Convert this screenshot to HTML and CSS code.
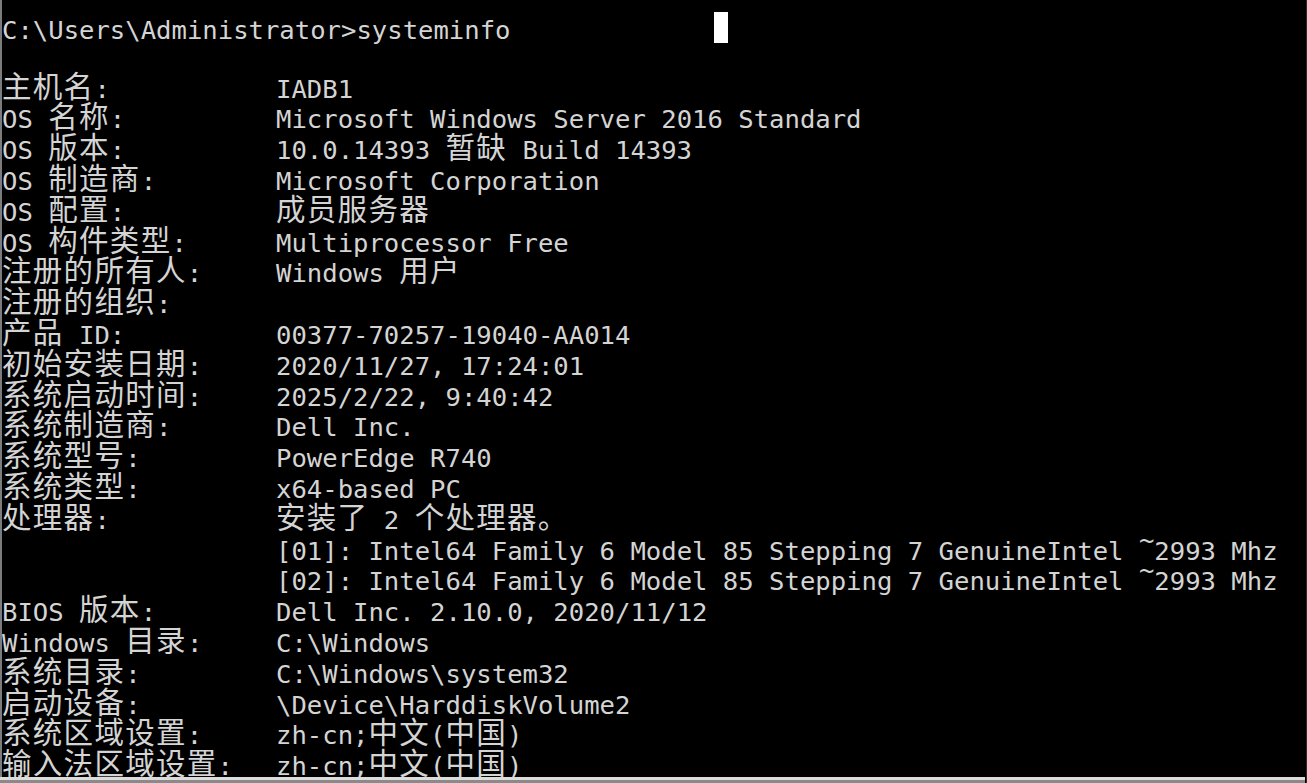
FILE: index.html
```html
<!DOCTYPE html>
<html lang="zh-CN">
<head>
    <meta charset="UTF-8">
    <meta name="viewport" content="width=device-width, initial-scale=1.0">
    <title>systeminfo</title>
    <link rel="stylesheet" href="styles.css">
</head>
<body>
    <div class="console">
        <div class="line">C:\Users\Administrator&gt;systeminfo<span class="cursor"></span></div>
        <div class="line"></div>

        <div class="row"><span class="key"><span class="zh">主机名</span>:</span><span class="val">IADB1</span></div>
        <div class="row"><span class="key">OS <span class="zh">名称</span>:</span><span class="val">Microsoft Windows Server 2016 Standard</span></div>
        <div class="row"><span class="key">OS <span class="zh">版本</span>:</span><span class="val">10.0.14393 <span class="zh">暂缺</span> Build 14393</span></div>
        <div class="row"><span class="key">OS <span class="zh">制造商</span>:</span><span class="val">Microsoft Corporation</span></div>
        <div class="row"><span class="key">OS <span class="zh">配置</span>:</span><span class="val"><span class="zh">成员服务器</span></span></div>
        <div class="row"><span class="key">OS <span class="zh">构件类型</span>:</span><span class="val">Multiprocessor Free</span></div>
        <div class="row"><span class="key"><span class="zh">注册的所有人</span>:</span><span class="val">Windows <span class="zh">用户</span></span></div>
        <div class="row"><span class="key"><span class="zh">注册的组织</span>:</span><span class="val"></span></div>
        <div class="row"><span class="key"><span class="zh">产品</span> ID:</span><span class="val">00377-70257-19040-AA014</span></div>
        <div class="row"><span class="key"><span class="zh">初始安装日期</span>:</span><span class="val">2020/11/27, 17:24:01</span></div>
        <div class="row"><span class="key"><span class="zh">系统启动时间</span>:</span><span class="val">2025/2/22, 9:40:42</span></div>
        <div class="row"><span class="key"><span class="zh">系统制造商</span>:</span><span class="val">Dell Inc.</span></div>
        <div class="row"><span class="key"><span class="zh">系统型号</span>:</span><span class="val">PowerEdge R740</span></div>
        <div class="row"><span class="key"><span class="zh">系统类型</span>:</span><span class="val">x64-based PC</span></div>
        <div class="row"><span class="key"><span class="zh">处理器</span>:</span><span class="val"><span class="zh">安装了</span> 2 <span class="zh">个处理器。</span></span></div>
        <div class="row"><span class="key"></span><span class="val">[01]: Intel64 Family 6 Model 85 Stepping 7 GenuineIntel <span class="tilde">~</span>2993 Mhz</span></div>
        <div class="row"><span class="key"></span><span class="val">[02]: Intel64 Family 6 Model 85 Stepping 7 GenuineIntel <span class="tilde">~</span>2993 Mhz</span></div>
        <div class="row"><span class="key">BIOS <span class="zh">版本</span>:</span><span class="val">Dell Inc. 2.10.0, 2020/11/12</span></div>
        <div class="row"><span class="key">Windows <span class="zh">目录</span>:</span><span class="val">C:\Windows</span></div>
        <div class="row"><span class="key"><span class="zh">系统目录</span>:</span><span class="val">C:\Windows\system32</span></div>
        <div class="row"><span class="key"><span class="zh">启动设备</span>:</span><span class="val">\Device\HarddiskVolume2</span></div>
        <div class="row"><span class="key"><span class="zh">系统区域设置</span>:</span><span class="val">zh-cn;<span class="zh">中文</span>(<span class="zh">中国</span>)</span></div>
        <div class="row"><span class="key"><span class="zh">输入法区域设置</span>:</span><span class="val">zh-cn;<span class="zh">中文</span>(<span class="zh">中国</span>)</span></div>
    </div>

    <div class="frame-bottom"></div>
</body>
</html>
```

FILE: styles.css
```css
html, body{
    margin: 0;
    height: 783px;
    overflow: hidden;
    background-color: #000;
}

.console{
    height: 100%;
    box-sizing: border-box;
    padding-top: 12px;
    border-left: 2px solid #7c7c7c;
    border-right: 1px solid #2a2a2a;
    color: #d4d4d4;
    font-family: "DejaVu Sans Mono", "Liberation Mono", monospace;
    font-size: 25.6px;
}

.line,
.row{
    height: 30.8px;
    line-height: 30.8px;
}

.line,
.key,
.val{
    white-space: pre;
}

.row{
    display: grid;
    grid-template-columns: 274px 1fr;
}

.zh{
    font-family: "Noto Sans CJK SC", sans-serif;
    font-size: 29.5px;
    letter-spacing: 1.3px;
    line-height: 0;
    vertical-align: 1px;
}

.tilde{
    vertical-align: 11px;
    line-height: 0;
}

.cursor{
    display: inline-block;
    width: 14px;
    height: 31px;
    margin-left: 203px;
    vertical-align: -4px;
    background-color: #fff;
}

.frame-bottom{
    position: fixed;
    left: 0;
    bottom: 0;
    width: 1305px;
    height: 3px;
    border-top: 3px solid #dcdcdc;
    background-color: #8a8a8a;
}
```
